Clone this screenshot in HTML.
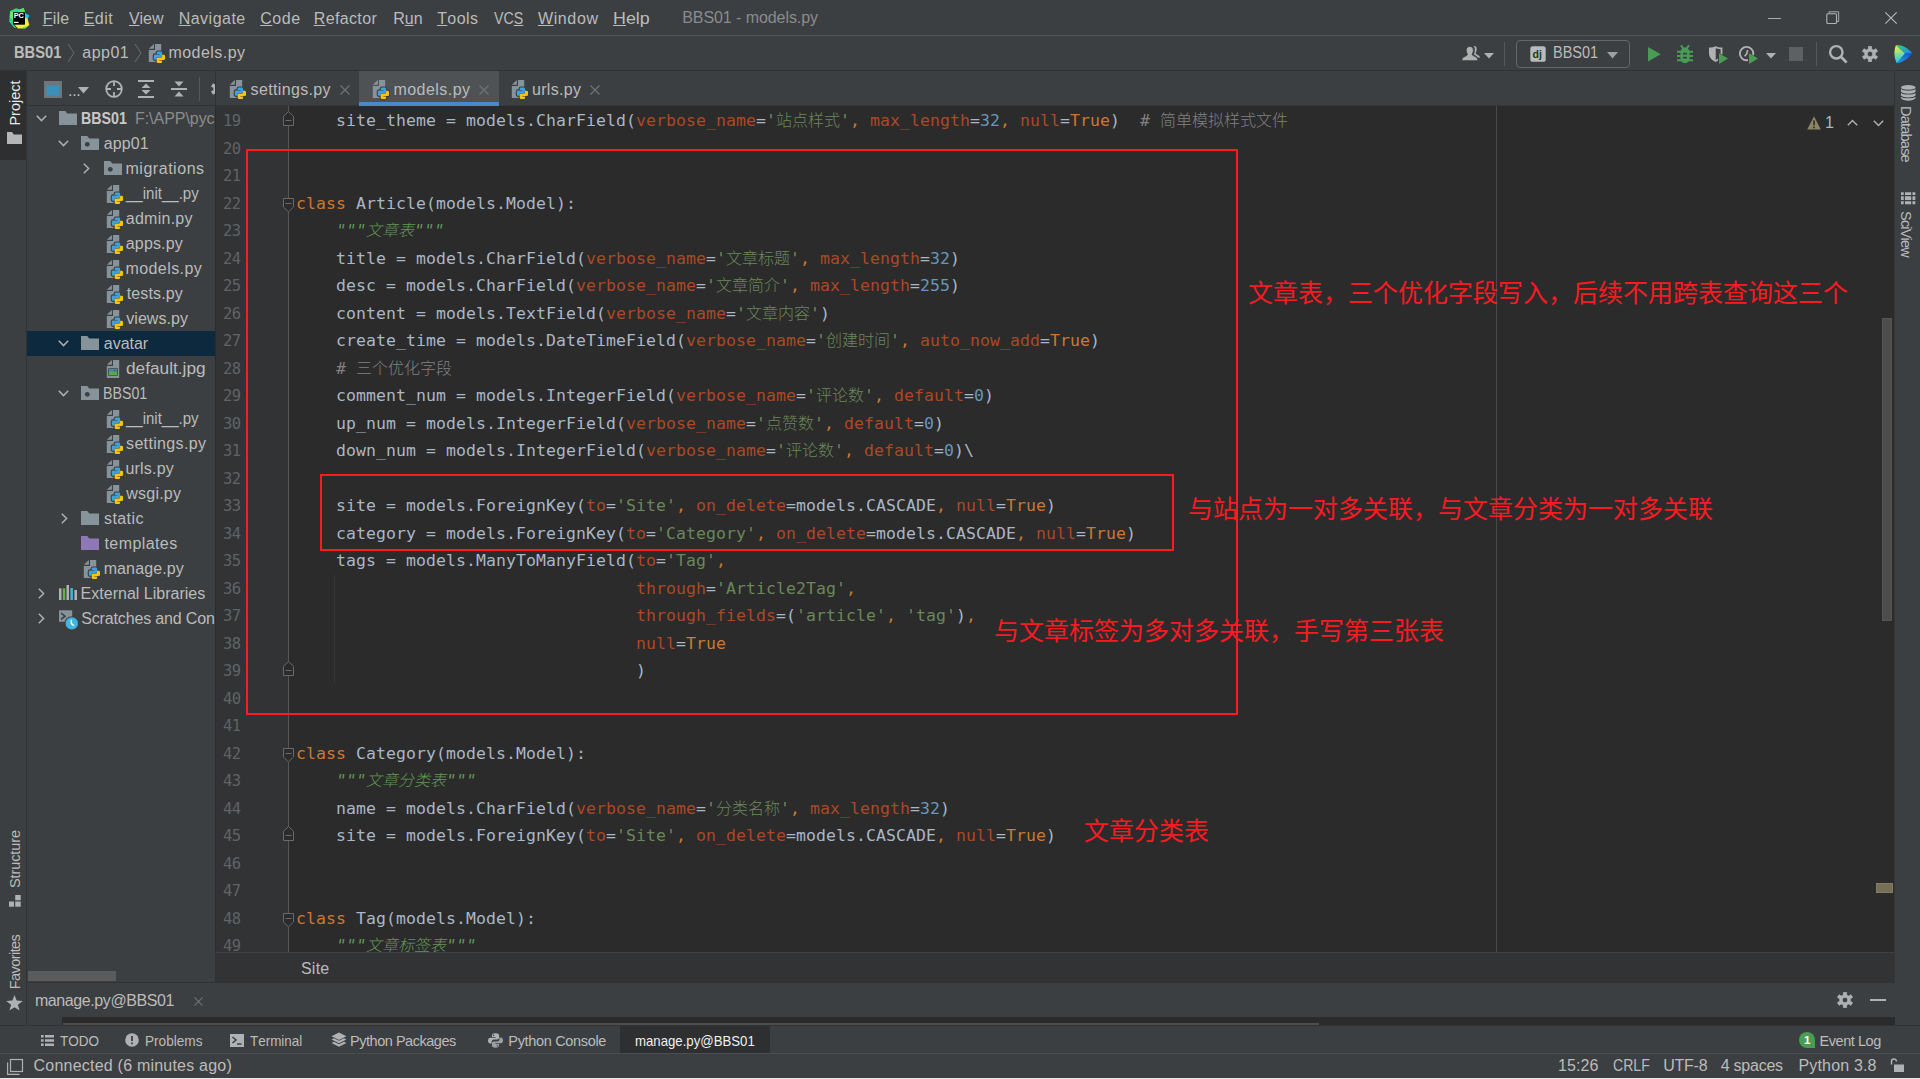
<!DOCTYPE html>
<html lang="zh"><head><meta charset="utf-8"><title>BBS01 - models.py</title>
<style>
*{box-sizing:border-box;margin:0;padding:0}
html,body{width:1920px;height:1079px;overflow:hidden;background:#3c3f41}
body{position:relative;font-family:"Liberation Sans","Noto Sans CJK SC",sans-serif;font-size:16px;color:#bbbbbb;font-kerning:none}
.a{position:absolute;white-space:pre}
.t{position:absolute;white-space:pre;line-height:20px;height:20px}
svg{position:absolute;overflow:visible}
.b{font-weight:bold}
u{text-decoration:underline;text-underline-offset:1px;text-decoration-thickness:1px}
#ed{position:absolute;left:215px;top:106px;width:1680px;height:846px;background:#2b2b2b;overflow:hidden}
#gut{position:absolute;left:1px;top:0;width:72px;height:848px;background:#313335}
.ln{position:absolute;left:8px;width:24px;text-align:left;color:#606366;font-family:"DejaVu Sans Mono","Liberation Mono",monospace;font-size:16.5px;line-height:28px;height:28px;letter-spacing:-0.6px;white-space:pre;transform:scaleX(.94);transform-origin:0 50%}
.cl{position:absolute;left:81px;color:#a9b7c6;font-family:"DejaVu Sans Mono","Liberation Mono","Noto Sans CJK SC",monospace;font-size:16.5px;letter-spacing:0.066px;line-height:28px;height:28px;white-space:pre}
.cl i,.cl b,.cl s,.cl em,.cl q,.cl var,.cl cite{font-style:normal;font-weight:normal;text-decoration:none}
.cl q:before,.cl q:after{content:none}
.cl i{color:#cc7832}
.cl b{color:#aa4926}
.cl s{color:#6a8759}
.cl em{color:#6897bb}
.cl var{color:#808080}
.cl cite{color:#629755;font-style:italic}
.cl .z{font-weight:300}
.sk{display:inline-block;transform:skewX(-10deg)}
.z{font-family:"Noto Sans CJK SC","WenQuanYi Zen Hei",sans-serif;font-size:16px;letter-spacing:0;display:inline-block;text-align:center;line-height:20px;vertical-align:baseline}
.red{position:absolute;color:#fa1a22;font-family:"Liberation Sans","Noto Sans CJK SC",sans-serif;font-size:25px;line-height:30px;height:30px;white-space:pre}
.rb{position:absolute;border:2px solid #fc1b23}
</style></head>
<body>

<svg width="0" height="0" style="position:absolute">
<defs>
<symbol id="py" viewBox="0 0 18 20">
  <path d="M0.8 4.7 L5.9 0 L5.9 4.7 Z" fill="#87939a"/>
  <path d="M7 0 H13.2 V17.9 H0.8 V5.9 H7 Z" fill="#87939a"/>
  <g transform="translate(5.8 7.5)">
  <path d="M2.9 0.9 Q2.9 0 4.2 0 L7 0 Q8.3 0 8.3 1.3 L8.3 4.2 Q8.3 5.5 7 5.5 L4.2 5.5 Q2.9 5.5 2.9 6.8 L2.9 8.3 L1.3 8.3 Q0 8.3 0 7 L0 4.2 Q0 2.9 1.3 2.9 L5.6 2.9 L5.6 2.5 L2.9 2.5 Z" fill="#3c3f41" stroke="#3c3f41" stroke-width="2.2" stroke-linejoin="round"/>
  <path d="M 8.3 10.6 Q 8.3 11.5 7.0 11.5 L 4.2 11.5 Q 2.9 11.5 2.9 10.2 L 2.9 7.3 Q 2.9 6.0 4.2 6.0 L 7.0 6.0 Q 8.3 6.0 8.3 4.7 L 8.3 3.2 L 9.9 3.2 Q 11.2 3.2 11.2 4.5 L 11.2 7.3 Q 11.2 8.6 9.9 8.6 L 5.6 8.6 L 5.6 9.0 L 8.3 9.0 Z" fill="#3c3f41" stroke="#3c3f41" stroke-width="2.2" stroke-linejoin="round"/>
  <path d="M2.9 0.9 Q2.9 0 4.2 0 L7 0 Q8.3 0 8.3 1.3 L8.3 4.2 Q8.3 5.5 7 5.5 L4.2 5.5 Q2.9 5.5 2.9 6.8 L2.9 8.3 L1.3 8.3 Q0 8.3 0 7 L0 4.2 Q0 2.9 1.3 2.9 L5.6 2.9 L5.6 2.5 L2.9 2.5 Z" fill="#40a0d8"/>
  <path d="M 8.3 10.6 Q 8.3 11.5 7.0 11.5 L 4.2 11.5 Q 2.9 11.5 2.9 10.2 L 2.9 7.3 Q 2.9 6.0 4.2 6.0 L 7.0 6.0 Q 8.3 6.0 8.3 4.7 L 8.3 3.2 L 9.9 3.2 Q 11.2 3.2 11.2 4.5 L 11.2 7.3 Q 11.2 8.6 9.9 8.6 L 5.6 8.6 L 5.6 9.0 L 8.3 9.0 Z" fill="#f8c40c"/>
  </g>
</symbol>
<symbol id="fold" viewBox="0 0 18 14">
  <path d="M0 0 H6.2 L8.3 2.6 H18 V14 H0 Z" fill="#87939a"/>
</symbol>
<symbol id="foldd" viewBox="0 0 18 14">
  <path d="M0 0 H6.2 L8.3 2.6 H18 V14 H0 Z" fill="#87939a"/>
  <circle cx="6.3" cy="8.3" r="2.4" fill="#3c3f41"/>
</symbol>
<symbol id="ad" viewBox="0 0 11 7">
  <path d="M0.8 0.8 L5.5 5.6 L10.2 0.8" fill="none" stroke="#adb0b2" stroke-width="1.5"/>
</symbol>
<symbol id="ar" viewBox="0 0 7 11">
  <path d="M0.8 0.8 L5.6 5.5 L0.8 10.2" fill="none" stroke="#adb0b2" stroke-width="1.5"/>
</symbol>
<symbol id="x" viewBox="0 0 10 10">
  <path d="M0.5 0.5 L9.5 9.5 M9.5 0.5 L0.5 9.5" fill="none" stroke="#6e7173" stroke-width="1.3"/>
</symbol>
<symbol id="gear" viewBox="0 0 16 16">
  <path fill="#afb1b3" fill-rule="evenodd" stroke="#afb1b3" stroke-width="0.7" stroke-linejoin="round" d="M9.57 2.94 L9.59 0.16 L6.41 0.16 L6.43 2.94 A5.3 5.3 0 0 0 4.40 4.11 L2.00 2.70 L0.42 5.46 L2.83 6.82 A5.3 5.3 0 0 0 2.83 9.18 L0.42 10.54 L2.00 13.30 L4.40 11.89 A5.3 5.3 0 0 0 6.43 13.06 L6.41 15.84 L9.59 15.84 L9.57 13.06 A5.3 5.3 0 0 0 11.60 11.89 L14.00 13.30 L15.58 10.54 L13.17 9.18 A5.3 5.3 0 0 0 13.17 6.82 L15.58 5.46 L14.00 2.70 L11.60 4.11 A5.3 5.3 0 0 0 9.57 2.94 Z M10.70 8 a2.7 2.7 0 1 0 -5.40 0 a2.7 2.7 0 1 0 5.40 0 Z"/>
</symbol>
<symbol id="foldm" viewBox="0 0 11 15">
  <path d="M0.5 5.2 L5.5 0.6 L10.5 5.2 V14.5 H0.5 Z" fill="#2b2b2b" stroke="#67696c" stroke-width="1"/>
  <path d="M2.5 9.5 H8.5" stroke="#67696c" stroke-width="1"/>
</symbol>
<symbol id="foldc" viewBox="0 0 11 15">
  <path d="M0.5 0.5 H10.5 V9 L5.5 13.9 L0.5 9 Z" fill="#2b2b2b" stroke="#67696c" stroke-width="1"/>
  <path d="M2.500 5.5 H8.5" stroke="#67696c" stroke-width="1"/>
</symbol>
</defs>
</svg>
<div class="a" style="left:0;top:0;width:1920px;height:35px;background:#3c3f41"></div>
<div class="a" style="left:0;top:35px;width:1920px;height:1px;background:#515456"></div>
<svg style="left:9px;top:7.800px" width="20.500" height="20.500" viewBox="0 0 20.500 20.500">
<path d="M0.200 13.500 L1.200 3 L7 0.200 L11 1.600 L14.700 0 L16.200 4.500 L4.300 4.500 L4.300 16.500 L7.500 20.200 L5 19.500 Z" fill="#27d98a"/>
<path d="M10.500 1.600 L14.700 0 L16.200 4.500 L8.500 4.500 Z" fill="#5ee05a"/>
<path d="M1.200 3 L4.300 4.500 L4.300 12 L0.700 9 Z" fill="#6fe86a"/>
<path d="M15.800 4.800 L20.300 7.500 L18.600 11.200 L15.800 9.800 Z" fill="#10ccf5"/>
<path d="M15.800 9.200 L18.600 10.800 L20.300 17 L16.500 20.300 L9 20.500 L5.500 16.800 L15.800 16.800 Z" fill="#f2ef3a"/>
<path d="M13.500 19.200 L18.500 18 L16.500 20.300 L12.500 20.500 Z" fill="#7be05a"/>
<rect x="4" y="4.300" width="12" height="12" fill="#000"/>
<rect x="5" y="13.800" width="4.600" height="1.200" fill="#fff"/>
<text x="4.700" y="10" font-family="Liberation Sans,sans-serif" font-weight="bold" font-size="7.400" fill="#fff" letter-spacing="-0.200">PC</text>
</svg>
<div class="t " style="left:42.69px;top:9px;font-size:16px;letter-spacing:0.247px;"><u>F</u>ile</div>
<div class="t " style="left:83.69px;top:9px;font-size:16px;letter-spacing:0.453px;"><u>E</u>dit</div>
<div class="t " style="left:128.93px;top:9px;font-size:16px;letter-spacing:-0.049px;"><u>V</u>iew</div>
<div class="t " style="left:178.69px;top:9px;font-size:16px;letter-spacing:0.482px;"><u>N</u>avigate</div>
<div class="t " style="left:260.19px;top:9px;font-size:16px;letter-spacing:0.591px;"><u>C</u>ode</div>
<div class="t " style="left:313.69px;top:9px;font-size:16px;letter-spacing:0.373px;"><u>R</u>efactor</div>
<div class="t " style="left:393.19px;top:9px;font-size:16px;letter-spacing:0.000px;">R<u>u</u>n</div>
<div class="t " style="left:437.14px;top:9px;font-size:16px;letter-spacing:0.453px;"><u>T</u>ools</div>
<div class="t " style="left:493.94px;top:9px;font-size:16px;transform:scaleX(0.8880);transform-origin:0 50%;">VC<u>S</u></div>
<div class="t " style="left:537.93px;top:9px;font-size:16px;letter-spacing:0.625px;"><u>W</u>indow</div>
<div class="t " style="left:612.54px;top:9px;font-size:16px;transform:scaleX(1.1157);transform-origin:0 50%;"><u>H</u>elp</div>
<div class="t " style="left:682.19px;top:8px;font-size:16px;letter-spacing:-0.069px;color:#8a8c8d;">BBS01 - models.py</div>
<div class="a" style="left:1768px;top:18px;width:13px;height:1px;background:#a8aaab"></div>
<svg style="left:1826px;top:11px" width="14" height="14" viewBox="0 0 14 14"><path d="M3 2.500 V0.800 H12.700 V10.500 H11" fill="none" stroke="#a8aaab" stroke-width="1"/><rect x="0.800" y="2.800" width="9.700" height="9.700" rx="1" fill="none" stroke="#b0b2b3" stroke-width="1.100"/></svg>
<svg style="left:1885px;top:12px" width="12" height="12" viewBox="0 0 12 12"><path d="M0.300 0.300 L11.700 11.700 M11.700 0.300 L0.300 11.700" fill="none" stroke="#b8babb" stroke-width="1.100"/></svg>
<div class="a" style="left:0;top:36px;width:1920px;height:34px;background:#3c3f41"></div>
<div class="a" style="left:0;top:70px;width:1920px;height:1px;background:#323232"></div>
<div class="t b" style="left:14.02px;top:43px;font-size:16px;transform:scaleX(0.9189);transform-origin:0 50%;">BBS01</div>
<svg style="left:67px;top:43px" width="8" height="20" viewBox="0 0 8 20"><path d="M1 1 L7 10 L1 19" fill="none" stroke="#6b6e70" stroke-width="1"/></svg>
<div class="t " style="left:82.32px;top:43px;font-size:16px;letter-spacing:0.492px;">app01</div>
<svg style="left:134px;top:43px" width="8" height="20" viewBox="0 0 8 20"><path d="M1 1 L7 10 L1 19" fill="none" stroke="#6b6e70" stroke-width="1"/></svg>
<svg style="left:148px;top:44px" width="18" height="20" ><use href="#py" width="18" height="20"/></svg>
<div class="t " style="left:168.44px;top:43px;font-size:16px;letter-spacing:0.459px;">models.py</div>
<svg style="left:1461px;top:45px" width="20" height="17" viewBox="0 0 20 17">
<path d="M12.6 1.2 C14.6 0.6 15.9 2.2 15.7 4.4 C15.6 6 15 7.2 14.6 8 C14.8 9.3 16.5 9.8 17.6 10.4 C18.6 11 19 11.6 19.2 12.4 L16.6 12.4 C16 10.6 14.2 10.2 12.9 9.4 C13.6 7.8 14 5.6 13.8 3.8 C13.7 2.6 13.2 1.7 12.6 1.2 Z" fill="#afb1b3"/>
<path d="M8.8 1.4 C11.2 1.4 12.6 3.2 12.4 5.6 C12.3 7.2 11.7 8.4 11.2 9.2 C11.3 10.6 13 11 14.6 11.8 C16 12.5 16.6 13.6 16.8 15.8 L0.8 15.8 C1 13.6 1.6 12.5 3 11.8 C4.600 11 6.300 10.600 6.400 9.200 C5.900 8.400 5.300 7.200 5.200 5.600 C5 3.200 6.400 1.400 8.800 1.400 Z" fill="#afb1b3" stroke="#3c3f41" stroke-width="0.9"/>
</svg>
<svg style="left:1484px;top:53px" width="10" height="6" viewBox="0 0 10 6"><path d="M0 0 H10 L5 5.5 Z" fill="#afb1b3"/></svg>
<div class="a" style="left:1504px;top:42px;width:1px;height:24px;background:#555759"></div>
<div class="a" style="left:1516px;top:40px;width:114px;height:28px;border:1px solid #646769;border-radius:4px"></div>
<svg style="left:1530px;top:46px" width="16" height="16" viewBox="0 0 16 16"><rect x="0.3" y="0.2" width="15.4" height="15.6" rx="2.6" fill="#b8bbbd"/><text x="2.6" y="11.6" font-family="Liberation Sans,sans-serif" font-weight="bold" font-size="10.5" fill="#0d4029">dj</text></svg>
<div class="t " style="left:1552.56px;top:43px;font-size:16px;transform:scaleX(0.9064);transform-origin:0 50%;">BBS01</div>
<svg style="left:1607px;top:52px" width="11" height="7" viewBox="0 0 11 7"><path d="M0 0 H11 L5.5 6.5 Z" fill="#9da0a2"/></svg>
<svg style="left:1648px;top:47px" width="13" height="15" viewBox="0 0 13 15"><path d="M0 0 L12.8 7.3 L0 14.6 Z" fill="#499c54"/></svg>
<svg style="left:1676px;top:44px" width="18" height="20" viewBox="0 0 18 20">
<g stroke="#499c54" stroke-width="2" fill="none" stroke-linecap="butt"><path d="M5 1.300 L8 5.600 M13 1.300 L10 5.600 M1 7.800 H17 M1 12.100 H17 M1 16.300 H17"/></g>
<path d="M4.400 9.200 C4.400 5.400 6.400 3.600 9 3.600 C11.600 3.600 13.600 5.400 13.600 9.200 V13.600 C13.600 17.200 11.600 19.300 9 19.300 C6.400 19.300 4.400 17.200 4.400 13.600 Z" fill="#499c54"/>
<rect x="7" y="8.800" width="4" height="1.700" fill="#3c3f41"/><rect x="7" y="12.800" width="4" height="1.700" fill="#3c3f41"/>
</svg>
<svg style="left:1708px;top:45px" width="21" height="20" viewBox="0 0 21 20">
<path d="M1 2.600 C4 2.400 6 1.900 7.700 1.200 C9.400 1.900 11.400 2.400 14.400 2.600 V8 C14.400 12.600 11.400 15.400 7.700 16.900 C4 15.400 1 12.600 1 8 Z" fill="#afb1b3"/>
<path d="M7.700 3.300 C9 3.800 10.600 4.100 12.600 4.300 V8 C12.600 11.400 10.500 13.600 7.700 14.900 Z" fill="#3c3f41"/>
<path d="M10 7.200 L21 13.600 L10 20 Z" fill="#3c3f41"/>
<path d="M11 8.300 L20 13.600 L11 18.900 Z" fill="#499c54"/>
</svg>
<svg style="left:1738px;top:45px" width="21" height="20" viewBox="0 0 21 20">
<circle cx="8.600" cy="8.600" r="6.700" fill="none" stroke="#afb1b3" stroke-width="1.900"/>
<path d="M9.700 5 L8.700 8.800 L6.600 11.200" fill="none" stroke="#afb1b3" stroke-width="1.600"/>
<path d="M10 7.200 L21 13.600 L10 20 Z" fill="#3c3f41"/>
<path d="M11 8.300 L20 13.600 L11 18.900 Z" fill="#499c54"/>
</svg>
<svg style="left:1766px;top:53px" width="10" height="6" viewBox="0 0 10 6"><path d="M0 0 H10 L5 5.5 Z" fill="#afb1b3"/></svg>
<div class="a" style="left:1789px;top:47px;width:14px;height:14px;background:#5e6163"></div>
<div class="a" style="left:1816px;top:42px;width:1px;height:24px;background:#555759"></div>
<svg style="left:1828px;top:44px" width="20" height="20" viewBox="0 0 20 20"><circle cx="8.300" cy="8.300" r="6.200" fill="none" stroke="#afb1b3" stroke-width="2.400"/><path d="M12.600 12.600 L18.600 18.600" stroke="#afb1b3" stroke-width="2.800"/></svg>
<svg style="left:1862px;top:46px" width="16" height="16" ><use href="#gear" width="16" height="16"/></svg>
<svg style="left:1893px;top:44px" width="20" height="20" viewBox="0 0 20 20">
<defs><linearGradient id="cg1" x1="0" y1="0" x2="0.150" y2="1"><stop offset="0" stop-color="#fbf236"/><stop offset="0.450" stop-color="#9be37c"/><stop offset="1" stop-color="#1fc4f4"/></linearGradient>
<linearGradient id="cg2" x1="0" y1="0" x2="1" y2="0.600"><stop offset="0" stop-color="#3fd47a"/><stop offset="1" stop-color="#1a8cf0"/></linearGradient>
<linearGradient id="cg3" x1="0" y1="1" x2="1" y2="0"><stop offset="0" stop-color="#1aa0ee"/><stop offset="1" stop-color="#1650c8"/></linearGradient></defs>
<path d="M3 1 C1 6 0.600 13 3.800 19.200 L12 9.600 Z" fill="url(#cg1)"/>
<path d="M3 1 C9 0.800 15.500 4.200 19.300 9.200 L12 9.600 Z" fill="url(#cg2)"/>
<path d="M3.800 19.200 C10 18.200 16 14.400 19.300 9.200 L12 9.600 Z" fill="url(#cg3)"/>
</svg>
<div class="a" style="left:0;top:71px;width:26px;height:955px;background:#3c3f41"></div>
<div class="a" style="left:0;top:71px;width:26px;height:89px;background:#2d2f30"></div>
<div class="a" style="left:26px;top:71px;width:1px;height:955px;background:#323232"></div>
<div class="a" style="left:14.5px;top:102.5px;width:0;height:0"><div class="a" style="left:-60px;top:-10px;width:120px;height:20px;line-height:20px;text-align:center;transform:rotate(-90deg);font-size:14.5px;color:#e8e8e8;letter-spacing:0px">Project</div></div>
<svg style="left:7px;top:132px" width="15" height="12" viewBox="0 0 15 12"><path d="M0 0 H5 L6.8 2.4 H15 V12 H0 Z" fill="#b4b6b8"/></svg>
<div class="a" style="left:14.5px;top:858.5px;width:0;height:0"><div class="a" style="left:-60px;top:-10px;width:120px;height:20px;line-height:20px;text-align:center;transform:rotate(-90deg);font-size:14.5px;color:#bbbbbb;letter-spacing:-0.1px">Structure</div></div>
<svg style="left:8.700px;top:895px" width="12" height="12" viewBox="0 0 12 12"><rect x="6.200" y="0" width="5.500" height="5.300" fill="#afb1b3"/><rect x="0" y="6.500" width="5" height="5.200" fill="#afb1b3"/><rect x="6.200" y="6.500" width="5.500" height="5.200" fill="#afb1b3"/></svg>
<div class="a" style="left:14.5px;top:962px;width:0;height:0"><div class="a" style="left:-60px;top:-10px;width:120px;height:20px;line-height:20px;text-align:center;transform:rotate(-90deg);font-size:14.5px;color:#bbbbbb;letter-spacing:-0.56px">Favorites</div></div>
<svg style="left:6px;top:995px" width="17" height="16" viewBox="0 0 17 16"><path d="M8.5 0 L10.6 5.6 L16.8 5.9 L11.9 9.7 L13.6 15.6 L8.5 12.2 L3.4 15.6 L5.1 9.7 L0.2 5.9 L6.4 5.6 Z" fill="#afb1b3"/></svg>
<div class="a" style="left:27px;top:71px;width:188px;height:912px;background:#3c3f41"></div>
<div class="a" style="left:27px;top:105px;width:188px;height:1px;background:#323232"></div>
<div class="a" style="left:215px;top:71px;width:1px;height:911px;background:#323232"></div>
<svg style="left:44px;top:81px" width="18" height="17" viewBox="0 0 18 17"><rect x="0" y="0" width="18" height="17" fill="#6e7679"/><rect x="2.5" y="4.5" width="13" height="10" fill="#3991bb"/></svg>
<div class="a" style="left:68px;top:83px;font-size:16px;line-height:16px;color:#bbb;letter-spacing:-0.3px">...</div>
<svg style="left:78px;top:87px" width="11" height="7" viewBox="0 0 11 7"><path d="M0 0 H11 L5.5 6.5 Z" fill="#afb1b3"/></svg>
<svg style="left:105px;top:80px" width="18" height="18" viewBox="0 0 18 18"><circle cx="9" cy="9" r="7.8" fill="none" stroke="#afb1b3" stroke-width="1.8"/><path d="M9 1 V6 M9 12 V17 M1 9 H6 M12 9 H17" stroke="#afb1b3" stroke-width="1.8"/></svg>
<svg style="left:138px;top:80px" width="16" height="18" viewBox="0 0 16 18"><path d="M0 1 H16 M0 17 H16" stroke="#afb1b3" stroke-width="2"/><path d="M8 3.5 L12.5 8 H3.5 Z M8 14.5 L12.5 10 H3.5 Z" fill="#afb1b3"/></svg>
<svg style="left:171px;top:80px" width="16" height="18" viewBox="0 0 16 18"><path d="M0 9 H16" stroke="#afb1b3" stroke-width="2"/><path d="M8 6.5 L12.5 1.5 H3.5 Z M8 11.5 L12.5 16.5 H3.5 Z" fill="#afb1b3"/></svg>
<div class="a" style="left:199px;top:77px;width:1px;height:24px;background:#555759"></div>
<div class="a" style="left:211px;top:81px;width:4px;height:16px;overflow:hidden"><svg style="left:0px;top:0px" width="16" height="16" ><use href="#gear" width="16" height="16"/></svg></div>
<svg style="left:36px;top:115px" width="11" height="7" ><use href="#ad" width="11" height="7"/></svg>
<svg style="left:59px;top:111px" width="18" height="14" ><use href="#fold" width="18" height="14"/></svg>
<div class="t b" style="left:80.95px;top:109px;font-size:16px;transform:scaleX(0.8909);transform-origin:0 50%;color:#c8c8c8;">BBS01</div>
<div class="a" style="left:132px;top:106px;width:83px;height:25px;overflow:hidden"><div class="t " style="left:2.99px;top:3px;font-size:16px;letter-spacing:-0.043px;color:#8a8c8d;">F:\APP\pyc</div></div>
<svg style="left:58px;top:140px" width="11" height="7" ><use href="#ad" width="11" height="7"/></svg>
<svg style="left:81px;top:136px" width="18" height="14" ><use href="#foldd" width="18" height="14"/></svg>
<div class="t " style="left:103.82px;top:134px;font-size:16px;letter-spacing:0.092px;">app01</div>
<svg style="left:83px;top:163px" width="7" height="11" ><use href="#ar" width="7" height="11"/></svg>
<svg style="left:104px;top:161px" width="18" height="14" ><use href="#foldd" width="18" height="14"/></svg>
<div class="t " style="left:125.44px;top:159px;font-size:16px;letter-spacing:0.537px;">migrations</div>
<svg style="left:106px;top:185px" width="18" height="20" ><use href="#py" width="18" height="20"/></svg>
<div class="t " style="left:126.23px;top:184px;font-size:16px;transform:scaleX(0.9394);transform-origin:0 50%;">__init__.py</div>
<svg style="left:106px;top:210px" width="18" height="20" ><use href="#py" width="18" height="20"/></svg>
<div class="t " style="left:125.82px;top:209px;font-size:16px;letter-spacing:0.256px;">admin.py</div>
<svg style="left:106px;top:235px" width="18" height="20" ><use href="#py" width="18" height="20"/></svg>
<div class="t " style="left:125.82px;top:234px;font-size:16px;letter-spacing:0.145px;">apps.py</div>
<svg style="left:106px;top:260px" width="18" height="20" ><use href="#py" width="18" height="20"/></svg>
<div class="t " style="left:125.44px;top:259px;font-size:16px;letter-spacing:0.434px;">models.py</div>
<svg style="left:106px;top:285px" width="18" height="20" ><use href="#py" width="18" height="20"/></svg>
<div class="t " style="left:126.76px;top:284px;font-size:16px;letter-spacing:0.120px;">tests.py</div>
<svg style="left:106px;top:310px" width="18" height="20" ><use href="#py" width="18" height="20"/></svg>
<div class="t " style="left:126.25px;top:309px;font-size:16px;letter-spacing:0.048px;">views.py</div>
<div class="a" style="left:27px;top:331px;width:188px;height:25px;background:#0d293e"></div>
<svg style="left:58px;top:340px" width="11" height="7" ><use href="#ad" width="11" height="7"/></svg>
<svg style="left:81px;top:336px" width="18" height="14" ><use href="#fold" width="18" height="14"/></svg>
<div class="t " style="left:103.82px;top:334px;font-size:16px;letter-spacing:-0.025px;">avatar</div>
<svg style="left:106px;top:360px" width="18" height="20" viewBox="0 0 18 20"><path d="M0.800 4.700 L5.900 0 L5.900 4.700 Z" fill="#87939a"/><path d="M7 0 H13.200 V17.900 H0.800 V5.900 H7 Z" fill="#87939a"/><rect x="2.200" y="8.300" width="9.600" height="7.400" fill="#3c3f41"/><rect x="2.900" y="9" width="8.200" height="6" fill="#3a8fb0"/><path d="M2.900 15 V12.800 L5.400 11.200 L8 12.800 L9.600 12 L11.100 12.800 V15 Z" fill="#62a83a"/><circle cx="8.800" cy="10.400" r="0.700" fill="#2b4a58"/></svg>
<div class="t " style="left:125.98px;top:359px;font-size:16px;transform:scaleX(1.0786);transform-origin:0 50%;">default.jpg</div>
<svg style="left:58px;top:390px" width="11" height="7" ><use href="#ad" width="11" height="7"/></svg>
<svg style="left:81px;top:386px" width="18" height="14" ><use href="#foldd" width="18" height="14"/></svg>
<div class="t " style="left:103.23px;top:384px;font-size:16px;transform:scaleX(0.8885);transform-origin:0 50%;">BBS01</div>
<svg style="left:106px;top:410px" width="18" height="20" ><use href="#py" width="18" height="20"/></svg>
<div class="t " style="left:126.23px;top:409px;font-size:16px;transform:scaleX(0.9368);transform-origin:0 50%;">__init__.py</div>
<svg style="left:106px;top:435px" width="18" height="20" ><use href="#py" width="18" height="20"/></svg>
<div class="t " style="left:126.05px;top:434px;font-size:16px;letter-spacing:0.339px;">settings.py</div>
<svg style="left:106px;top:460px" width="18" height="20" ><use href="#py" width="18" height="20"/></svg>
<div class="t " style="left:125.46px;top:459px;font-size:16px;letter-spacing:0.191px;">urls.py</div>
<svg style="left:106px;top:485px" width="18" height="20" ><use href="#py" width="18" height="20"/></svg>
<div class="t " style="left:126.32px;top:484px;font-size:16px;letter-spacing:0.209px;">wsgi.py</div>
<svg style="left:61px;top:513px" width="7" height="11" ><use href="#ar" width="7" height="11"/></svg>
<svg style="left:81px;top:511px" width="18" height="14" ><use href="#fold" width="18" height="14"/></svg>
<div class="t " style="left:104.05px;top:509px;font-size:16px;letter-spacing:0.405px;">static</div>
<svg style="left:81px;top:536px" width="18" height="14" viewBox="0 0 18 14"><path d="M0 0 H6.2 L8.3 2.6 H18 V14 H0 Z" fill="#8e79b6"/></svg>
<div class="t " style="left:104.46px;top:534px;font-size:16px;letter-spacing:0.419px;">templates</div>
<svg style="left:83px;top:560px" width="18" height="20" ><use href="#py" width="18" height="20"/></svg>
<div class="t " style="left:103.64px;top:559px;font-size:16px;letter-spacing:0.129px;">manage.py</div>
<svg style="left:38px;top:588px" width="7" height="11" ><use href="#ar" width="7" height="11"/></svg>
<svg style="left:59px;top:585px" width="18" height="15" viewBox="0 0 18 15"><rect x="0" y="3.300" width="2.500" height="11.700" fill="#afb1b3"/><rect x="3.800" y="3.300" width="2.500" height="11.700" fill="#62b543"/><rect x="7.500" y="0" width="2.500" height="15" fill="#afb1b3"/><rect x="11.400" y="3" width="2.500" height="12" fill="#40b6e0"/><rect x="15.400" y="5" width="2.600" height="10" fill="#afb1b3"/></svg>
<div class="t " style="left:80.59px;top:584px;font-size:16px;letter-spacing:0.011px;">External Libraries</div>
<svg style="left:38px;top:613px" width="7" height="11" ><use href="#ar" width="7" height="11"/></svg>
<svg style="left:59px;top:610px" width="19" height="20" viewBox="0 0 19 20"><path d="M0 0.300 H13.200 V11.800 H0 Z" fill="#87939a"/><path d="M2 3 L6 6.2 L2 9.4" fill="none" stroke="#3c3f41" stroke-width="1.6"/><circle cx="12.800" cy="13.400" r="7.200" fill="#3c3f41"/><circle cx="12.800" cy="13.400" r="6.200" fill="#40b6e0"/><path d="M12.300 9.800 V13.600 L15 15.600" fill="none" stroke="#e8f6fc" stroke-width="1.500"/></svg>
<div class="a" style="left:78px;top:606px;width:137px;height:25px;overflow:hidden"><div class="t " style="left:3.17px;top:3px;font-size:16px;letter-spacing:-0.145px;">Scratches and Con</div></div>
<div class="a" style="left:28px;top:971px;width:88px;height:10px;background:#595b5d"></div>
<div class="a" style="left:216px;top:71px;width:1679px;height:34px;background:#3c3f41"></div>
<div class="a" style="left:216px;top:105px;width:1679px;height:1px;background:#333537"></div>
<div class="a" style="left:359px;top:71px;width:140px;height:31px;background:#4e5254"></div>
<div class="a" style="left:359px;top:102px;width:140px;height:4px;background:#4a88c7"></div>
<svg style="left:229px;top:80px" width="18" height="20" ><use href="#py" width="18" height="20"/></svg>
<div class="t " style="left:250.55px;top:80px;font-size:16px;letter-spacing:0.349px;">settings.py</div>
<svg style="left:340px;top:85px" width="10" height="10" ><use href="#x" width="10" height="10"/></svg>
<svg style="left:372px;top:80px" width="18" height="20" ><use href="#py" width="18" height="20"/></svg>
<div class="t " style="left:393.44px;top:80px;font-size:16px;letter-spacing:0.459px;">models.py</div>
<svg style="left:479px;top:85px" width="10" height="10" ><use href="#x" width="10" height="10"/></svg>
<svg style="left:511px;top:80px" width="18" height="20" ><use href="#py" width="18" height="20"/></svg>
<div class="t " style="left:531.96px;top:80px;font-size:16px;letter-spacing:0.324px;">urls.py</div>
<svg style="left:590px;top:85px" width="10" height="10" ><use href="#x" width="10" height="10"/></svg>
<div id="ed"><div id="gut"></div>
<div class="a" style="left:73px;top:0;width:1px;height:848px;background:#555555"></div>
<div class="a" style="left:1281px;top:0;width:1px;height:848px;background:#4a4a4a"></div>
<div class="a" style="left:119px;top:469px;width:1px;height:108px;background:#393939"></div>
<div class="ln" style="top:1px">19</div>
<div class="cl" style="top:1px">    site_theme = models.CharField(<b>verbose_name</b>=<s>'<span class="z">站点样式</span>'</s><i>,</i> <b>max_length</b>=<em>32</em><i>,</i> <b>null</b>=<i>True</i>)  <var># <span class="z">简单模拟样式文件</span></var></div>
<div class="ln" style="top:29px">20</div>
<div class="ln" style="top:56px">21</div>
<div class="ln" style="top:84px">22</div>
<div class="cl" style="top:84px"><i>class</i> Article(models.Model):</div>
<div class="ln" style="top:111px">23</div>
<div class="cl" style="top:111px">    <cite><span class="sk">"""</span><span class="z">文章表</span><span class="sk">"""</span></cite></div>
<div class="ln" style="top:139px">24</div>
<div class="cl" style="top:139px">    title = models.CharField(<b>verbose_name</b>=<s>'<span class="z">文章标题</span>'</s><i>,</i> <b>max_length</b>=<em>32</em>)</div>
<div class="ln" style="top:166px">25</div>
<div class="cl" style="top:166px">    desc = models.CharField(<b>verbose_name</b>=<s>'<span class="z">文章简介</span>'</s><i>,</i> <b>max_length</b>=<em>255</em>)</div>
<div class="ln" style="top:194px">26</div>
<div class="cl" style="top:194px">    content = models.TextField(<b>verbose_name</b>=<s>'<span class="z">文章内容</span>'</s>)</div>
<div class="ln" style="top:221px">27</div>
<div class="cl" style="top:221px">    create_time = models.DateTimeField(<b>verbose_name</b>=<s>'<span class="z">创建时间</span>'</s><i>,</i> <b>auto_now_add</b>=<i>True</i>)</div>
<div class="ln" style="top:249px">28</div>
<div class="cl" style="top:249px">    <var># <span class="z">三个优化字段</span></var></div>
<div class="ln" style="top:276px">29</div>
<div class="cl" style="top:276px">    comment_num = models.IntegerField(<b>verbose_name</b>=<s>'<span class="z">评论数</span>'</s><i>,</i> <b>default</b>=<em>0</em>)</div>
<div class="ln" style="top:304px">30</div>
<div class="cl" style="top:304px">    up_num = models.IntegerField(<b>verbose_name</b>=<s>'<span class="z">点赞数</span>'</s><i>,</i> <b>default</b>=<em>0</em>)</div>
<div class="ln" style="top:331px">31</div>
<div class="cl" style="top:331px">    down_num = models.IntegerField(<b>verbose_name</b>=<s>'<span class="z">评论数</span>'</s><i>,</i> <b>default</b>=<em>0</em>)\</div>
<div class="ln" style="top:359px">32</div>
<div class="ln" style="top:386px">33</div>
<div class="cl" style="top:386px">    site = models.ForeignKey(<b>to</b>=<s>'Site'</s><i>,</i> <b>on_delete</b>=models.CASCADE<i>,</i> <b>null</b>=<i>True</i>)</div>
<div class="ln" style="top:414px">34</div>
<div class="cl" style="top:414px">    category = models.ForeignKey(<b>to</b>=<s>'Category'</s><i>,</i> <b>on_delete</b>=models.CASCADE<i>,</i> <b>null</b>=<i>True</i>)</div>
<div class="ln" style="top:441px">35</div>
<div class="cl" style="top:441px">    tags = models.ManyToManyField(<b>to</b>=<s>'Tag'</s><i>,</i></div>
<div class="ln" style="top:469px">36</div>
<div class="cl" style="top:469px">                                  <b>through</b>=<s>'Article2Tag'</s><i>,</i></div>
<div class="ln" style="top:496px">37</div>
<div class="cl" style="top:496px">                                  <b>through_fields</b>=(<s>'article'</s><i>,</i> <s>'tag'</s>)<i>,</i></div>
<div class="ln" style="top:524px">38</div>
<div class="cl" style="top:524px">                                  <b>null</b>=<i>True</i></div>
<div class="ln" style="top:551px">39</div>
<div class="cl" style="top:551px">                                  )</div>
<div class="ln" style="top:579px">40</div>
<div class="ln" style="top:606px">41</div>
<div class="ln" style="top:634px">42</div>
<div class="cl" style="top:634px"><i>class</i> Category(models.Model):</div>
<div class="ln" style="top:661px">43</div>
<div class="cl" style="top:661px">    <cite><span class="sk">"""</span><span class="z">文章分类表</span><span class="sk">"""</span></cite></div>
<div class="ln" style="top:689px">44</div>
<div class="cl" style="top:689px">    name = models.CharField(<b>verbose_name</b>=<s>'<span class="z">分类名称</span>'</s><i>,</i> <b>max_length</b>=<em>32</em>)</div>
<div class="ln" style="top:716px">45</div>
<div class="cl" style="top:716px">    site = models.ForeignKey(<b>to</b>=<s>'Site'</s><i>,</i> <b>on_delete</b>=models.CASCADE<i>,</i> <b>null</b>=<i>True</i>)</div>
<div class="ln" style="top:744px">46</div>
<div class="ln" style="top:771px">47</div>
<div class="ln" style="top:799px">48</div>
<div class="cl" style="top:799px"><i>class</i> Tag(models.Model):</div>
<div class="ln" style="top:826px">49</div>
<div class="cl" style="top:826px">    <cite><span class="sk">"""</span><span class="z">文章标签表</span><span class="sk">"""</span></cite></div>
<svg style="left:68px;top:5px" width="11" height="15" ><use href="#foldm" width="11" height="15"/></svg>
<svg style="left:68px;top:92px" width="11" height="15" ><use href="#foldc" width="11" height="15"/></svg>
<svg style="left:68px;top:555px" width="11" height="15" ><use href="#foldm" width="11" height="15"/></svg>
<svg style="left:68px;top:642px" width="11" height="15" ><use href="#foldc" width="11" height="15"/></svg>
<svg style="left:68px;top:720px" width="11" height="15" ><use href="#foldm" width="11" height="15"/></svg>
<svg style="left:68px;top:807px" width="11" height="15" ><use href="#foldc" width="11" height="15"/></svg>
<div class="rb" style="left:31px;top:43px;width:992px;height:566px"></div>
<div class="rb" style="left:105px;top:368px;width:854px;height:77px"></div>
<div class="red" style="left:1033px;top:172px">文章表，三个优化字段写入，后续不用跨表查询这三个</div>
<div class="red" style="left:973px;top:388px">与站点为一对多关联，与文章分类为一对多关联</div>
<div class="red" style="left:779px;top:510px">与文章标签为多对多关联，手写第三张表</div>
<div class="red" style="left:869px;top:710px">文章分类表</div>
<svg style="left:1592px;top:10px" width="14" height="14" viewBox="0 0 14 14"><path d="M7 0.3 L13.8 13.5 H0.2 Z" fill="#8c8466"/><path d="M7 4.5 V9.3 M7 10.5 V12.2" stroke="#2b2b2b" stroke-width="1.6"/></svg>
<div class="t" style="left:1610px;top:7px;font-size:16px;color:#a9b7c6">1</div>
<svg style="left:1632px;top:13px" width="11" height="7" viewBox="0 0 11 7"><path d="M0.8 6.2 L5.5 1.4 L10.2 6.2" fill="none" stroke="#afb1b3" stroke-width="1.4"/></svg>
<svg style="left:1658px;top:14px" width="11" height="7" viewBox="0 0 11 7"><path d="M0.8 0.8 L5.5 5.6 L10.2 0.8" fill="none" stroke="#afb1b3" stroke-width="1.4"/></svg>
<div class="a" style="left:1667px;top:212px;width:10px;height:303px;background:#4d4d4d;border:1px solid #545454"></div>
<div class="a" style="left:1661px;top:777px;width:17px;height:10px;background:#766e57;border:1px solid #857b5f"></div>
</div>
<div class="a" style="left:216px;top:953px;width:1679px;height:29px;background:#313335"></div>
<div class="a" style="left:216px;top:952px;width:1679px;height:1px;background:#3e4043"></div>
<div class="t " style="left:300.97px;top:959px;font-size:16px;letter-spacing:0.222px;">Site</div>
<div class="a" style="left:1895px;top:71px;width:25px;height:955px;background:#3c3f41"></div>
<div class="a" style="left:1894px;top:71px;width:1px;height:35px;background:#323232"></div><div class="a" style="left:1894px;top:106px;width:1px;height:920px;background:#343637"></div>
<svg style="left:1901px;top:85px" width="14.500" height="16" viewBox="0 0 14.500 16"><ellipse cx="7.250" cy="2.400" rx="7.250" ry="2.400" fill="#afb1b3"/><path d="M0 4 C2 6.200 12.500 6.200 14.500 4 V6.800 C12.500 9.300 2 9.300 0 6.800 Z M0 7.900 C2 10.100 12.500 10.100 14.500 7.900 V10.600 C12.500 13.100 2 13.100 0 10.600 Z M0 11.700 C2 13.900 12.500 13.900 14.500 11.700 V13.300 C12.500 16.600 2 16.600 0 13.300 Z" fill="#afb1b3"/></svg>
<div class="a" style="left:1905.5px;top:133.5px;width:0;height:0"><div class="a" style="left:-60px;top:-10px;width:120px;height:20px;line-height:20px;text-align:center;transform:rotate(90deg);font-size:14.5px;color:#bbbbbb;letter-spacing:-0.78px">Database</div></div>
<svg style="left:1901px;top:192px" width="14.500" height="12.400" viewBox="0 0 14.500 12.400"><path d="M0 0.200H2.700V2.900H0Z M4 0.200H10.200V2.900H4Z M11.500 0.200H14.300V2.900H11.500Z M0 4.300H2.700V7.900H0Z M4 4.300H10.200V7.900H4Z M11.500 4.300H14.300V7.900H11.500Z M0 9.300H2.700V12.200H0Z M4 9.300H10.200V12.200H4Z M11.500 9.300H14.300V12.200H11.500Z" fill="#afb1b3"/></svg>
<div class="a" style="left:1905.5px;top:233.7px;width:0;height:0"><div class="a" style="left:-60px;top:-10px;width:120px;height:20px;line-height:20px;text-align:center;transform:rotate(90deg);font-size:14.5px;color:#bbbbbb;letter-spacing:-0.83px">SciView</div></div>
<div class="a" style="left:27px;top:982px;width:1868px;height:1px;background:#323232"></div>
<div class="a" style="left:27px;top:983px;width:1868px;height:35px;background:#3c3f41"></div>
<div class="t " style="left:34.94px;top:991px;font-size:16px;letter-spacing:-0.413px;">manage.py@BBS01</div>
<svg style="left:193.5px;top:996.5px" width="9" height="9" ><use href="#x" width="9" height="9"/></svg>
<svg style="left:1837px;top:992px" width="16" height="16" ><use href="#gear" width="16" height="16"/></svg>
<div class="a" style="left:1870px;top:999px;width:16px;height:2px;background:#afb1b3"></div>
<div class="a" style="left:62px;top:1017px;width:1833px;height:8px;background:#2b2b2b"></div>
<div class="a" style="left:63px;top:1023px;width:1256px;height:2px;background:#4d4d4d"></div>
<div class="a" style="left:0;top:1025px;width:1920px;height:1px;background:#323232"></div>
<div class="a" style="left:0;top:1026px;width:1920px;height:28px;background:#3c3f41"></div>
<div class="a" style="left:620px;top:1026px;width:150px;height:27px;background:#2d2f30"></div>
<svg style="left:41px;top:1035px" width="13" height="11" viewBox="0 0 13 11"><path d="M0 0H2.6V2.4H0Z M4 0H13V2.4H4Z M0 4.3H2.6V6.7H0Z M4 4.3H13V6.7H4Z M0 8.6H2.6V11H0Z M4 8.6H13V11H4Z" fill="#afb1b3"/></svg>
<div class="t " style="left:60.10px;top:1031px;font-size:14.5px;transform:scaleX(0.9323);transform-origin:0 50%;">TODO</div>
<svg style="left:125px;top:1033px" width="14" height="14" viewBox="0 0 14 14"><circle cx="7" cy="7" r="6.8" fill="#afb1b3"/><path d="M7 3 V8 M7 9.6 V11.2" stroke="#3c3f41" stroke-width="1.8"/></svg>
<div class="t " style="left:144.68px;top:1031px;font-size:14.5px;transform:scaleX(0.9390);transform-origin:0 50%;">Problems</div>
<svg style="left:230px;top:1034px" width="14" height="13" viewBox="0 0 14 13"><rect x="0" y="0" width="14" height="13" fill="#afb1b3"/><path d="M2.5 3 L6 6 L2.5 9" fill="none" stroke="#3c3f41" stroke-width="1.5"/><path d="M7 10 H11.5" stroke="#3c3f41" stroke-width="1.5"/></svg>
<div class="t " style="left:250.30px;top:1031px;font-size:14.5px;transform:scaleX(0.9273);transform-origin:0 50%;">Terminal</div>
<svg style="left:330.500px;top:1032px" width="16" height="16" viewBox="0 0 15 15"><path d="M7.5 0.5 L14.5 4 L7.5 7.5 L0.5 4 Z" fill="#afb1b3"/><path d="M0.5 7 L2.8 5.9 L7.5 8.3 L12.2 5.9 L14.5 7 L7.5 10.6 Z M0.5 10.2 L2.8 9.1 L7.5 11.5 L12.2 9.1 L14.5 10.2 L7.5 13.8 Z" fill="#afb1b3"/></svg>
<div class="t " style="left:350.06px;top:1031px;font-size:14.5px;letter-spacing:-0.474px;">Python Packages</div>
<svg style="left:488px;top:1033px" width="15" height="15" viewBox="0 0 15 15"><path d="M7.3 0.3c-2.2 0-3.3.8-3.3 2.1v1.7h3.6v.6H2.4C1 4.7 0 5.8 0 7.6s.9 3 2.2 3h1.4V8.8c0-1.3 1-2.3 2.3-2.3h3.3c1.1 0 1.9-.9 1.9-1.9V2.4c0-1.2-1.100-2.100-3.800-2.100z" fill="#afb1b3"/><path d="M7.700 14.700c2.200 0 3.300-.8 3.300-2.100v-1.700H7.400v-.6h5.200c1.400 0 2.400-1.100 2.400-2.900s-.9-3-2.200-3h-1.400v1.800c0 1.300-1 2.300-2.300 2.300H5.800c-1.100 0-1.900.9-1.900 1.900v2.200c0 1.200 1.100 2.100 3.800 2.100z" fill="#9da0a2"/><circle cx="5.600" cy="2.200" r=".7" fill="#3c3f41"/><circle cx="9.400" cy="12.800" r=".7" fill="#3c3f41"/></svg>
<div class="t " style="left:508.31px;top:1031px;font-size:14.5px;letter-spacing:-0.330px;">Python Console</div>
<div class="t " style="left:634.62px;top:1031px;font-size:14.5px;transform:scaleX(0.9101);transform-origin:0 50%;color:#f0f0f0;">manage.py@BBS01</div>
<svg style="left:1799px;top:1032px" width="16" height="16" viewBox="0 0 16 16"><path d="M8 0 a8 8 0 0 1 8 8 V16 H8 a8 8 0 0 1 0 -16 Z" fill="#499c54"/><text x="5" y="12.3" font-family="Liberation Sans,sans-serif" font-weight="bold" font-size="11.5" fill="#fff">1</text></svg>
<div class="t " style="left:1819.41px;top:1031px;font-size:14.5px;letter-spacing:-0.422px;">Event Log</div>
<div class="a" style="left:0;top:1053px;width:1920px;height:1px;background:#4b4e50"></div>
<div class="a" style="left:0;top:1054px;width:1920px;height:24px;background:#3c3f41"></div>
<svg style="left:7px;top:1059px" width="16" height="16" viewBox="0 0 16 16"><rect x="3.5" y="0.500" width="12" height="12" fill="none" stroke="#afb1b3" stroke-width="1.2"/><path d="M0.600 3.500 V15.400 H12.500" fill="none" stroke="#afb1b3" stroke-width="1.2"/></svg>
<div class="t " style="left:33.59px;top:1056px;font-size:16px;letter-spacing:0.217px;">Connected (6 minutes ago)</div>
<div class="t " style="left:1557.98px;top:1056px;font-size:16px;letter-spacing:0.096px;">15:26</div>
<div class="t " style="left:1612.59px;top:1056px;font-size:16px;transform:scaleX(0.8790);transform-origin:0 50%;">CRLF</div>
<div class="t " style="left:1663.17px;top:1056px;font-size:16px;letter-spacing:-0.225px;">UTF-8</div>
<div class="t " style="left:1720.63px;top:1056px;font-size:16px;letter-spacing:-0.228px;">4 spaces</div>
<div class="t " style="left:1798.49px;top:1056px;font-size:16px;letter-spacing:0.168px;">Python 3.8</div>
<svg style="left:1890px;top:1058px" width="15" height="15" viewBox="0 0 15 15"><path d="M1.500 6.500 V3.500 a2.500 2.500 0 0 1 5 0" fill="none" stroke="#afb1b3" stroke-width="1.500"/><rect x="4" y="6.500" width="10" height="7.500" fill="#afb1b3"/></svg>
<div class="a" style="left:0;top:1078px;width:1920px;height:1px;background:#e9e9e9"></div>
</body></html>
